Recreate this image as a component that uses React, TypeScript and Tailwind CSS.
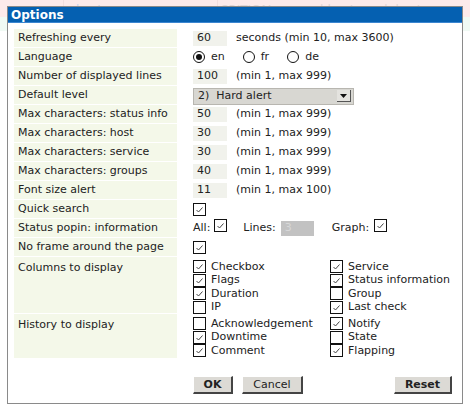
import React from "react";

function Check({ on }: { on: boolean }) {
  return (
    <span className="inline-flex h-[13px] w-[13px] shrink-0 items-center justify-center border border-[#111] bg-white">
      {on && (
        <svg width="11" height="11" viewBox="0 0 11 11">
          <path d="M2.5 6 L4.5 8 L8.5 3.5" fill="none" stroke="#444" strokeWidth="1" />
        </svg>
      )}
    </span>
  );
}

function Radio({ on, label }: { on: boolean; label: string }) {
  return (
    <span className="flex items-center gap-[6px]">
      <span className="flex h-[12px] w-[12px] items-center justify-center rounded-full border border-[#111] bg-white">
        {on && <span className="h-[6px] w-[6px] rounded-full bg-[#111]" />}
      </span>
      <span>{label}</span>
    </span>
  );
}

function Num({ value, hint }: { value: string; hint: string }) {
  return (
    <div className="flex items-center gap-[9px]">
      <span className="flex h-[15px] w-[34px] items-center bg-[#f1f2ec] pl-[4px]">{value}</span>
      <span>{hint}</span>
    </div>
  );
}

function Row({ label, children, tall }: { label: string; children: React.ReactNode; tall?: string }) {
  return (
    <div className={`flex ${tall ?? "h-[18px]"}`}>
      <div
        className={`flex w-[163px] shrink-0 bg-[#f4f8e9] pl-[4px] ${tall ? "items-start pt-[3px]" : "items-center"}`}
      >
        {label}
      </div>
      <div className={`ml-[16px] flex flex-1 ${tall ? "items-start" : "items-center"}`}>{children}</div>
    </div>
  );
}

function CheckList({ items, pt }: { items: [string, boolean][]; pt: string }) {
  return (
    <div className={`grid grid-cols-[137px_1fr] ${pt}`}>
      {items.map(([name, on]) => (
        <div key={name} className="flex h-[13.5px] items-center gap-[5px]">
          <Check on={on} />
          <span>{name}</span>
        </div>
      ))}
    </div>
  );
}

export default function App() {
  return (
    <div className="relative h-[410px] w-[470px] overflow-hidden bg-white text-[11px] text-[#222] [font-family:'DejaVu_Sans',sans-serif]">
      {/* page behind the dialog */}
      <div className="flex h-[17px] bg-[#fdeaea] text-[12px] text-[#c9d4ea]">
        <div className="w-[64px] border-r border-[#f3dede]" />
        <div className="w-[154px] border-r border-[#f3dede] pl-[12px] pt-[1px]">host</div>
        <div className="flex gap-[24px] pl-[2px] pt-[1px] text-[#e2d6d6]">
          <span>CRITICAL</span>
          <span>could not reach host</span>
        </div>
      </div>
      <div className="h-[14px] bg-[#f0faf4]" />

      <div className="absolute left-[7px] top-[6px] flex h-[398px] w-[456px] flex-col border border-[#8a8a8a] bg-white">
        <div className="flex h-[16px] items-center border-b border-[#3b86d0] bg-[#0560b1] pl-[3px] text-[12px] font-bold text-white">
          Options
        </div>

        <div className="mt-[6px] flex flex-col gap-px pl-[6px]">
          <Row label="Refreshing every">
            <Num value="60" hint="seconds (min 10, max 3600)" />
          </Row>
          <Row label="Language">
            <div className="flex gap-[18px]">
              <Radio on label="en" />
              <Radio on={false} label="fr" />
              <Radio on={false} label="de" />
            </div>
          </Row>
          <Row label="Number of displayed lines">
            <Num value="100" hint="(min 1, max 999)" />
          </Row>
          <Row label="Default level">
            <div className="mt-[2px] flex h-[17px] w-[161px] items-center justify-between border border-[#b8b6b0] bg-[#d8d7d2] pl-[4px] pr-[2px]">
              <span>2)&nbsp; Hard alert</span>
              <span className="flex h-[12px] w-[14px] items-center justify-center border-b border-r border-[#555] border-l-white border-t-white bg-[#e4e3df]">
                <svg width="7" height="4" viewBox="0 0 7 4">
                  <path d="M0 0 H7 L3.5 4 Z" fill="#111" />
                </svg>
              </span>
            </div>
          </Row>
          <Row label="Max characters: status info">
            <Num value="50" hint="(min 1, max 999)" />
          </Row>
          <Row label="Max characters: host">
            <Num value="30" hint="(min 1, max 999)" />
          </Row>
          <Row label="Max characters: service">
            <Num value="30" hint="(min 1, max 999)" />
          </Row>
          <Row label="Max characters: groups">
            <Num value="40" hint="(min 1, max 999)" />
          </Row>
          <Row label="Font size alert">
            <Num value="11" hint="(min 1, max 100)" />
          </Row>
          <Row label="Quick search">
            <Check on />
          </Row>
          <Row label="Status popin: information">
            <div className="flex items-center">
              <span>All:</span>
              <span className="ml-[4px]">
                <Check on />
              </span>
              <span className="ml-[16px]">Lines:</span>
              <span className="ml-[5px] flex h-[15px] w-[33px] items-center bg-[#c2c2c2] pl-[4px] text-[#d8d8d8]">3</span>
              <span className="ml-[18px]">Graph:</span>
              <span className="ml-[5px]">
                <Check on />
              </span>
            </div>
          </Row>
          <Row label="No frame around the page">
            <Check on />
          </Row>
          <Row label="Columns to display" tall="h-[56px]">
            <CheckList
              pt="pt-[3px]"
              items={[
                ["Checkbox", true],
                ["Service", true],
                ["Flags", true],
                ["Status information", true],
                ["Duration", true],
                ["Group", false],
                ["IP", false],
                ["Last check", true],
              ]}
            />
          </Row>
          <Row label="History to display" tall="h-[44px]">
            <CheckList
              pt="pt-[3px]"
              items={[
                ["Acknowledgement", false],
                ["Notify", true],
                ["Downtime", true],
                ["State", false],
                ["Comment", true],
                ["Flapping", true],
              ]}
            />
          </Row>
        </div>

        <div className="mt-[18px] flex pl-[185px] pr-[10px]">
          <button className="h-[18px] w-[40px] border-b-2 border-r-2 border-b-[#444] border-r-[#444] border-l border-t border-l-white border-t-white bg-[#dcdad5] font-bold">
            OK
          </button>
          <button className="ml-[9px] h-[18px] w-[61px] border-b-2 border-r-2 border-b-[#444] border-r-[#444] border-l border-t border-l-white border-t-white bg-[#dcdad5]">
            Cancel
          </button>
          <button className="ml-auto h-[18px] w-[58px] border-b-2 border-r-2 border-b-[#444] border-r-[#444] border-l border-t border-l-white border-t-white bg-[#dcdad5] font-bold">
            Reset
          </button>
        </div>
      </div>
    </div>
  );
}
